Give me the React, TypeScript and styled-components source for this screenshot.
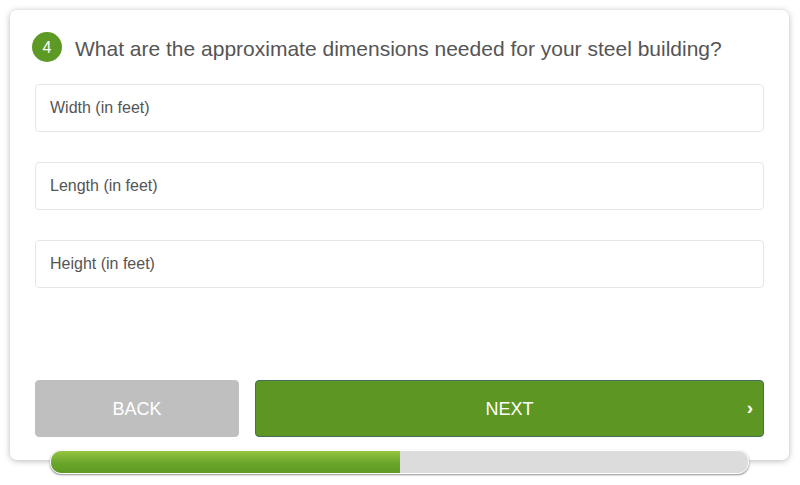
import styled, { createGlobalStyle } from "styled-components";

const GlobalStyle = createGlobalStyle`
  html, body {
    margin: 0;
    padding: 0;
    background: #ffffff;
    font-family: "Liberation Sans", Arial, sans-serif;
  }
`;

const Page = styled.div`
  width: 800px;
  height: 485px;
  padding: 10px 11px 0 10px;
  box-sizing: border-box;
`;

const Card = styled.div`
  position: relative;
  height: 450px;
  background: #fff;
  border-radius: 7px;
  box-shadow: 0 1px 6px rgba(0, 0, 0, 0.28);
  padding: 22px 25px 0 25px;
  box-sizing: border-box;
  display: flex;
  flex-direction: column;
`;

const Header = styled.div`
  display: flex;
  align-items: center;
  gap: 13px;
  height: 30px;
  margin: 0 0 22px -3px;
`;

const StepBadge = styled.div`
  width: 30px;
  height: 30px;
  box-sizing: border-box;
  padding-top: 2px;
  border-radius: 50%;
  background: #5c9a25;
  color: #fff;
  font-size: 16px;
  display: flex;
  align-items: center;
  justify-content: center;
  flex-shrink: 0;
`;

const Question = styled.h2`
  margin: 0;
  padding-top: 3px;
  font-size: 21px;
  font-weight: 400;
  color: #555;
  line-height: 30px;
  white-space: nowrap;
`;

const Fields = styled.div`
  display: flex;
  flex-direction: column;
  gap: 30px;
`;

const Field = styled.input`
  height: 48px;
  box-sizing: border-box;
  border: 1px solid #e6e6e6;
  border-radius: 4px;
  padding: 0 14px;
  font-family: "Liberation Sans", Arial, sans-serif;
  font-size: 16px;
  color: #555;
  outline: none;
  &::placeholder {
    color: #555;
  }
`;

const Actions = styled.div`
  display: flex;
  gap: 16px;
  margin-top: 92px;
`;

const Button = styled.button<{ $primary?: boolean }>`
  position: relative;
  height: 57px;
  padding-top: 3px;
  border-radius: 4px;
  border: 1px solid ${({ $primary }) => ($primary ? "#44705a" : "#bfbfbf")};
  background: ${({ $primary }) => ($primary ? "#5d9623" : "#bfbfbf")};
  color: #fff;
  font-family: "Liberation Sans", Arial, sans-serif;
  font-size: 18px;
  flex: ${({ $primary }) => ($primary ? "1" : "0 0 204px")};
  cursor: pointer;
`;

const Chevron = styled.span`
  position: absolute;
  right: 10px;
  top: 50%;
  transform: translateY(-58%);
  font-size: 19px;
  font-weight: 700;
  line-height: 1;
`;

const Progress = styled.div`
  position: absolute;
  left: 40px;
  right: 40px;
  bottom: -14px;
  height: 22px;
  border-radius: 11px;
  background: #dcdcdc;
  border: 1px solid #fff;
  box-shadow: 0 1px 2px rgba(0, 0, 0, 0.45);
  overflow: hidden;
`;

const ProgressFill = styled.div`
  height: 100%;
  background: linear-gradient(to bottom, #93c53f 0%, #6aa52a 55%, #5e9a24 100%);
`;

export default function App() {
  const progress = 50;
  return (
    <Page>
      <GlobalStyle />
      <Card>
        <Header>
          <StepBadge>4</StepBadge>
          <Question>What are the approximate dimensions needed for your steel building?</Question>
        </Header>
        <Fields>
          <Field placeholder="Width (in feet)" />
          <Field placeholder="Length (in feet)" />
          <Field placeholder="Height (in feet)" />
        </Fields>
        <Actions>
          <Button>BACK</Button>
          <Button $primary>
            NEXT
            <Chevron>›</Chevron>
          </Button>
        </Actions>
        <Progress>
          <ProgressFill style={{ width: `${progress}%` }} />
        </Progress>
      </Card>
    </Page>
  );
}
